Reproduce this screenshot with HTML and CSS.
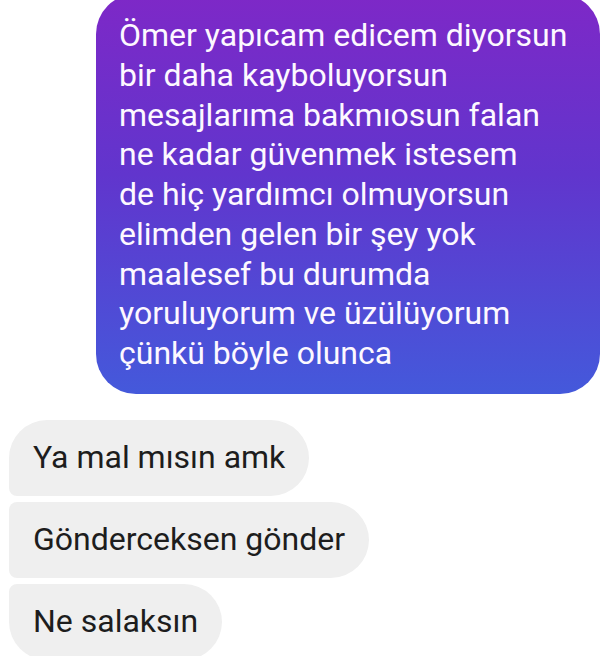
FILE: index.html
```html
<html>
    <head>
        <title>Sohbet</title>
        <link rel="stylesheet" href="styles.css">
    </head>
    <body>
        <div id="thread">
            <div class="msg out">
                Ömer yapıcam edicem diyorsun<br>
                bir daha kayboluyorsun<br>
                mesajlarıma bakmıosun falan<br>
                ne kadar güvenmek istesem<br>
                de hiç yardımcı olmuyorsun<br>
                elimden gelen bir şey yok<br>
                maalesef bu durumda<br>
                yoruluyorum ve üzülüyorum<br>
                çünkü böyle olunca
            </div>
            <div class="group">
                <div class="msg in first">Ya mal mısın amk</div>
                <div class="msg in">Gönderceksen gönder</div>
                <div class="msg in last">Ne salaksın</div>
            </div>
        </div>
    </body>
</html>
```

FILE: styles.css
```css
body {
    margin: 0;
    height: 656px;
    overflow: hidden;
    background-color: #fff;
    font-family: Roboto, "Noto Sans", sans-serif;
    font-size: 32px;
}
#thread {
    display: flex;
    flex-direction: column;
    margin-top: -6px;
}
.msg.out {
    align-self: flex-end;
    margin-right: 16px;
    width: 504px;
    box-sizing: border-box;
    padding: 22px 16px 20px 23px;
    line-height: 39.75px;
    white-space: nowrap;
    color: #fdf8ff;
    border-radius: 40px;
    background: linear-gradient(180deg, #7e28c7 0%, #6135cd 45%, #4459db 100%);
}
.group {
    display: flex;
    flex-direction: column;
    align-items: flex-start;
    gap: 6px;
    margin-top: 26px;
    margin-left: 9px;
}
.msg.in {
    height: 76px;
    box-sizing: border-box;
    padding: 0 24px;
    line-height: 74px;
    color: #1d1d1d;
    background-color: #efefef;
    border-radius: 8px 38px 38px 8px;
}
.msg.in.first {
    border-top-left-radius: 38px;
}
.msg.in.last {
    border-bottom-left-radius: 38px;
}
```
